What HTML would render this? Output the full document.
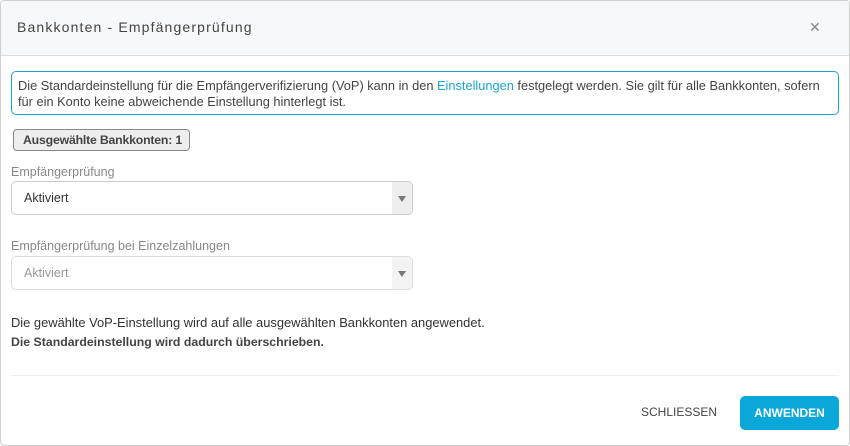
<!DOCTYPE html>
<html><head><meta charset="utf-8"><style>
*{box-sizing:border-box;margin:0;padding:0}
body{width:850px;height:446px;background:#fff;font-family:"Liberation Sans",Arial,sans-serif;color:#333;position:relative;overflow:hidden}
.dlg{position:absolute;left:0;top:0;width:850px;height:446px;border:1px solid #cfcfcf;border-radius:4px;overflow:hidden}
.in{position:absolute;left:-1px;top:-1px;width:850px;height:446px}
.hdr{position:absolute;left:0;top:0;width:850px;height:56px;background:#f7f8f9;border-bottom:1px solid #ddd}
.t{position:absolute;left:17px;top:19px;font-size:14px;letter-spacing:1.15px;color:#444}
.x{position:absolute;left:809px;top:19px;font-size:14px;color:#888}
.info{position:absolute;left:11px;top:71px;width:828px;height:44px;border:1px solid #1aa6d4;border-radius:5px;font-size:12.8px;line-height:16px;padding:6px 0 0 6px;color:#444;letter-spacing:0}
.info a{color:#1aa6d4;text-decoration:none}
.badge{position:absolute;left:13px;top:129px;width:177px;height:22px;background:#eee;border:1px solid #888;border-radius:4px;font-size:12.3px;font-weight:bold;padding:3px 0 0 9px;color:#444;letter-spacing:-0.2px}
.lbl{position:absolute;left:11px;font-size:12.5px;color:#888}
.sel{position:absolute;left:11px;width:402px;height:34px;border:1px solid #ccc;border-radius:5px;overflow:hidden;font-size:12.5px;padding:9px 0 0 12px}
.sel .ar{position:absolute;right:0;top:0;width:20px;height:34px;background:#eee}
.sel .ar:after{content:"";position:absolute;left:6px;top:14px;border-left:4px solid transparent;border-right:4px solid transparent;border-top:6px solid #777}
.p{position:absolute;left:11px;font-size:12.9px;color:#333}
.hr{position:absolute;left:11px;top:375px;width:828px;height:1px;background:#eee}
.close{position:absolute;left:641px;top:405px;font-size:12px;color:#444}
.btn{position:absolute;left:740px;top:396px;width:99px;height:34px;background:#0aa8d8;border-radius:5px;color:#fff;font-weight:bold;font-size:12px;text-align:center;line-height:34px}
</style></head><body><div class="dlg"><div class="in">
<div class="hdr"><div class="t">Bankkonten - Empfängerprüfung</div><div class="x">✕</div></div>
<div class="info">Die Standardeinstellung für die Empfängerverifizierung (VoP) kann in den <a>Einstellungen</a> festgelegt werden. Sie gilt für alle Bankkonten, sofern<br>für ein Konto keine abweichende Einstellung hinterlegt ist.</div>
<div class="badge">Ausgewählte Bankkonten: 1</div>
<div class="lbl" style="top:165px">Empfängerprüfung</div>
<div class="sel" style="top:181px;color:#333">Aktiviert<div class="ar"></div></div>
<div class="lbl" style="top:239px">Empfängerprüfung bei Einzelzahlungen</div>
<div class="sel" style="top:256px;color:#999;border-color:#ddd">Aktiviert<div class="ar" style="background:#f3f3f3"></div></div>
<div class="p" style="top:315px">Die gewählte VoP-Einstellung wird auf alle ausgewählten Bankkonten angewendet.</div>
<div class="p" style="top:335px;font-weight:bold;color:#444;font-size:12.3px">Die Standardeinstellung wird dadurch überschrieben.</div>
<div class="hr"></div>
<div class="close">SCHLIESSEN</div>
<div class="btn">ANWENDEN</div>
</div></div></body></html>
